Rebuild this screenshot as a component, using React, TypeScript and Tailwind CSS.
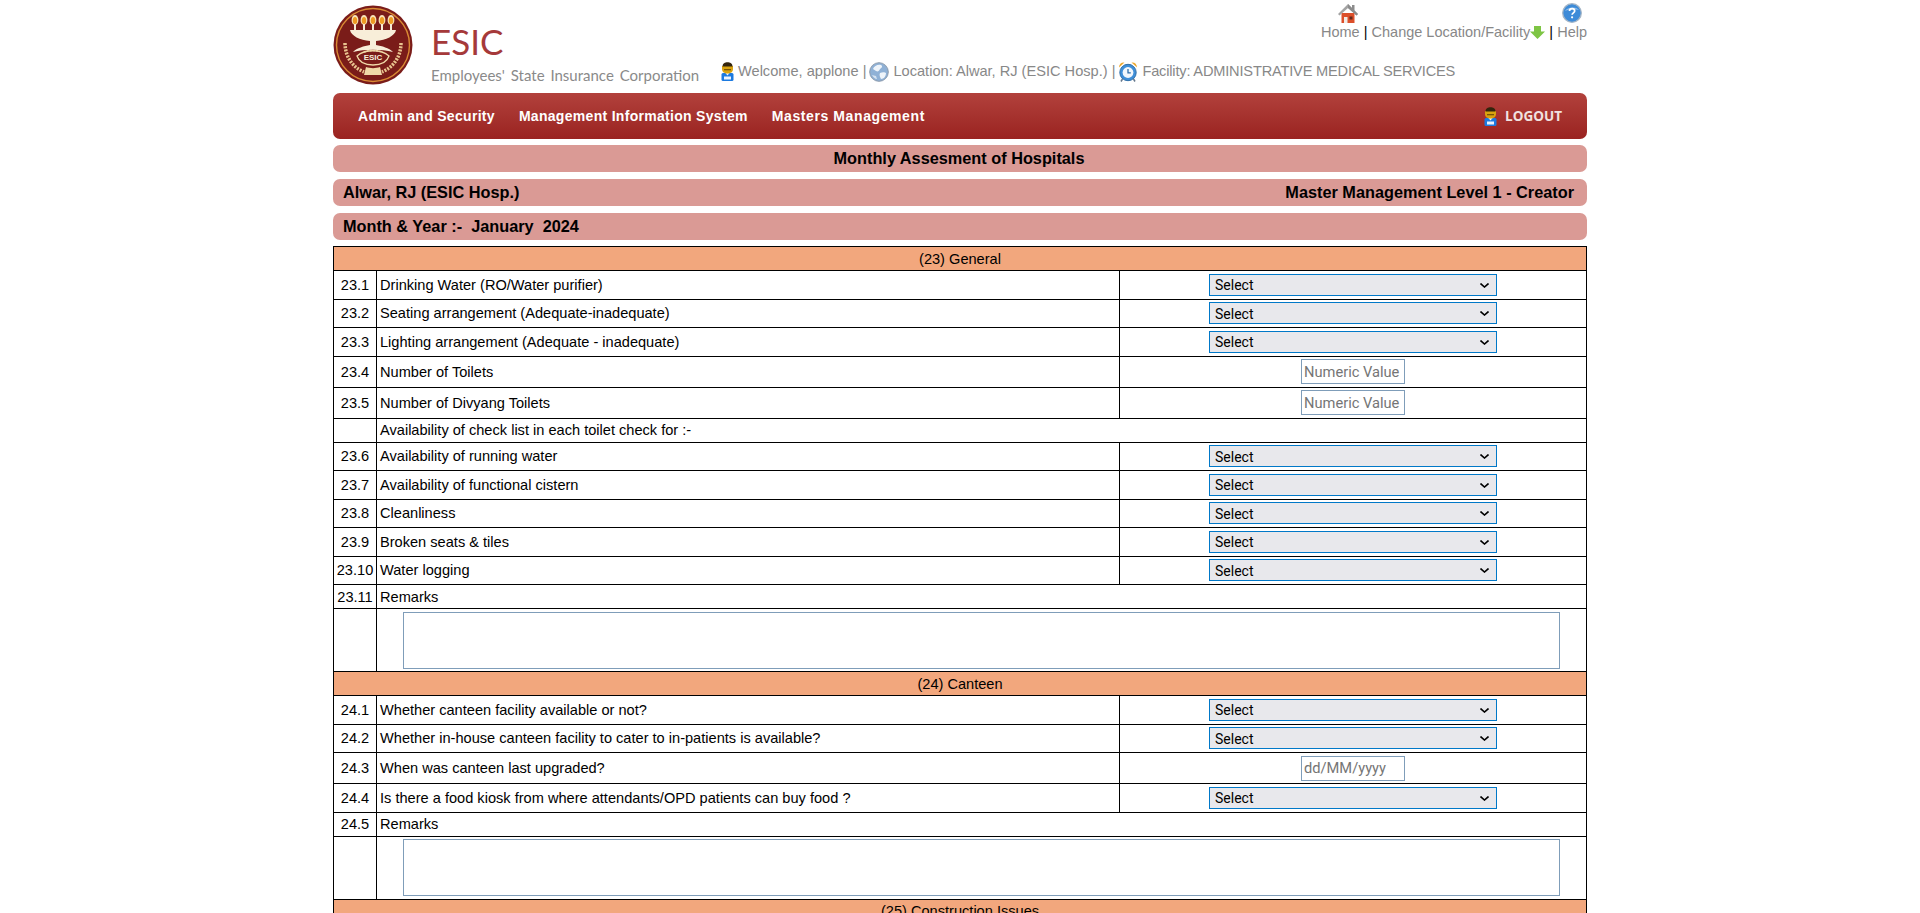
const SANS = "font-['Liberation_Sans',Arial,sans-serif]"

function UserIcon({ className = '' }: { className?: string }) {
  return (
    <svg viewBox="0 0 13 19" className={className}>
      <rect x="0.500" y="11" width="12" height="8" rx="1.500" fill="#1c7ae0" />
      <rect x="3" y="14.500" width="7" height="3" fill="#eaf3ff" />
      <path d="M4 10.500h5l-2.500 3z" fill="#f2f2f2" />
      <path d="M1 4h11v3c0 3-2.500 4.500-5.500 4.500S1 10 1 7z" fill="#d9a30f" />
      <rect x="3" y="7" width="7" height="1.300" fill="#7a5506" />
      <path d="M1.500 4.500C1.500 1.500 4 .3 6.500.3s5 1.200 5 4.200z" fill="#33240c" />
    </svg>
  )
}

function GlobeIcon({ className = '' }: { className?: string }) {
  return (
    <svg viewBox="0 0 20 20" className={className}>
      <circle cx="10" cy="10" r="9.300" fill="#8fb1d6" stroke="#8c9bac" />
      <path d="M4 7c1-3 5-5 8-4 2 1 1 3-1 4-1 2-2 3-4 2-1-1-2-1-3-2zM11 11c2-1 5-1 6 0 0 3-2 6-5 6-1-2-2-4-1-6z" fill="#eef4fa" />
      <path d="M3 13c1 2 3 4 5 4l-1-3z" fill="#d5e3f1" />
    </svg>
  )
}

function ClockIcon({ className = '' }: { className?: string }) {
  return (
    <svg viewBox="0 0 20 21" className={className}>
      <path d="M1 6.500C1 3 3.500 1 6.500 1.500zM19 6.500C19 3 16.500 1 13.500 1.500z" fill="#eda92f" />
      <path d="M4.500 18l-1.500 2.500M15.500 18l1.500 2.500" stroke="#66788c" strokeWidth="1.500" />
      <circle cx="10" cy="11.500" r="8.200" fill="#3f8fd8" stroke="#2f6fa9" />
      <circle cx="10" cy="11.500" r="5.400" fill="#f2f7fc" />
      <path d="M10 8v3.800h2.800" fill="none" stroke="#2f6fa9" strokeWidth="1.300" />
    </svg>
  )
}

function HomeIcon({ className = '' }: { className?: string }) {
  return (
    <svg viewBox="0 0 20 20" className={className}>
      <path d="M3.500 10h13v10h-13z" fill="#dc4f2a" />
      <rect x="6" y="14" width="3.500" height="6" fill="#f1ece6" />
      <rect x="11.500" y="13.500" width="3" height="3" fill="#62281a" />
      <path d="M0 11L10 1l10 10-1.500 1.500L10 5 1.500 12.500z" fill="#a3a3a3" />
      <path d="M10 1l4 4V2h2.500v5.500L20 11l-1.500 1.500L10 5z" fill="#8c8c8c" />
    </svg>
  )
}

function HelpIcon({ className = '' }: { className?: string }) {
  return (
    <svg viewBox="0 0 20 20" className={className}>
      <circle cx="10" cy="10" r="9.300" fill="#3d8bd8" stroke="#a4b5c6" strokeWidth="1.300" />
      <path d="M3 8c2-4 11-5 14-1-4-1-10-1-14 1z" fill="#8dbdea" />
      <path d="M7.500 8c0-3.200 5.200-3.200 5.200 0 0 1.800-2.600 2-2.600 3.800" fill="none" stroke="#fff" strokeWidth="1.700" />
      <circle cx="10.100" cy="14.300" r="1.100" fill="#fff" />
    </svg>
  )
}

function DownArrow({ className = '' }: { className?: string }) {
  return (
    <svg viewBox="0 0 15 13" className={className}>
      <path d="M4 0h7v5.500h4L7.500 13 0 5.500h4z" fill="#7ec544" />
    </svg>
  )
}

function Logo() {
  return (
    <svg viewBox="0 0 80 80" className="mt-[5px] h-[80px] w-[80px] shrink-0">
      <circle cx="40" cy="40" r="39.500" fill="#7a1c19" />
      <circle cx="40" cy="40" r="36.500" fill="none" stroke="#d98a34" strokeWidth="1.400" />
      {[22, 31, 40, 49, 58].map(x => (
        <g key={x}>
          <ellipse cx={x} cy="15" rx="3.400" ry="5" fill="#f7e3b8" />
          <ellipse cx={x} cy="15.500" rx="2.200" ry="3.600" fill="#ee9a22" />
          <rect x={x - 1} y="19" width="2" height="6" fill="#f7ecd6" />
        </g>
      ))}
      <path d="M17 25h46c-1 6-10 10-20 11v4c6 1 13 3 17 7-12-3-28-3-40 0 4-4 11-6 17-7v-4c-10-1-19-5-20-11z" fill="#f8eed9" />
      <path d="M24 51c8-7 24-7 32 0-2 6-8 9-16 9s-14-3-16-9z" fill="#7a1c19" stroke="#f0d9a8" strokeWidth="1.300" />
      <path d="M31 47c5-2 13-2 18 0" fill="none" stroke="#f0d9a8" strokeWidth="1.500" strokeDasharray="2 1" />
      <text x="40" y="55" textAnchor="middle" fontSize="8" fontWeight="700" fill="#f8eed9" fontFamily="Liberation Sans, sans-serif">ESIC</text>
      <path d="M12 38c0 13 7 24 19 29M68 38c0 13-7 24-19 29" fill="none" stroke="#e9c48f" strokeWidth="3.500" strokeDasharray="2 1.200" />
      <path d="M33 62l-2 8h18l-2-8c-4 1.500-10 1.500-14 0z" fill="#f0d9a8" />
    </svg>
  )
}

function Sep() {
  return <span className="text-black">|</span>
}

function Select() {
  return (
    <div className="relative mx-auto h-[22px] w-[288px]">
      <select className="block h-full w-full appearance-none border border-[#0078c8] bg-[#e8e8ec] pl-[5px] pt-[2px] font-['Roboto',sans-serif] text-[14px] text-black">
        <option>Select</option>
      </select>
      <svg viewBox="0 0 9 5" className="pointer-events-none absolute right-[8px] top-[9px] h-[5px] w-[9px]">
        <path d="M.500.500l4 3.500 4-3.500" fill="none" stroke="#000" strokeWidth="1.600" />
      </svg>
    </div>
  )
}

function TextBox({ placeholder }: { placeholder: string }) {
  return (
    <input
      placeholder={placeholder}
      className="mx-auto block h-[25px] w-[104px] border border-[#7f9db9] px-[2px] font-['Roboto',sans-serif] text-[14.670px] placeholder:text-[#757575]"
    />
  )
}

const cell = 'border border-black align-middle'
const textCell = `${cell} px-[3px] pb-0 pt-[1px]`
const noCell = `${cell} px-0 pb-0 pt-[1px] text-center`

function SectionRow({ title }: { title: string }) {
  return (
    <tr className="h-[24px]">
      <td colSpan={3} className={`${noCell} bg-[#f2a77d]`}>{title}</td>
    </tr>
  )
}

function SelectRow({ no, label }: { no: string; label: string }) {
  return (
    <tr className="h-[28.500px]">
      <td className={noCell}>{no}</td>
      <td className={textCell}>{label}</td>
      <td className={`${cell} p-0`}><Select /></td>
    </tr>
  )
}

function InputRow({ no, label, placeholder }: { no: string; label: string; placeholder: string }) {
  return (
    <tr className="h-[31px]">
      <td className={noCell}>{no}</td>
      <td className={textCell}>{label}</td>
      <td className={`${cell} p-0`}><TextBox placeholder={placeholder} /></td>
    </tr>
  )
}

function RemarksRows({ no }: { no: string }) {
  return (
    <>
      <tr className="h-[24px]">
        <td className={noCell}>{no}</td>
        <td colSpan={2} className={textCell}>Remarks</td>
      </tr>
      <tr className="h-[63px]">
        <td className={cell}></td>
        <td colSpan={2} className={`${cell} p-0`}>
          <textarea className="ml-[26px] block h-[57px] w-[1157px] resize-none border border-[#7f9db9]" />
        </td>
      </tr>
    </>
  )
}

export default function App() {
  return (
    <div className={`h-screen overflow-hidden bg-white text-[14.600px] leading-[17px] text-black ${SANS}`}>
      <div className="mx-auto w-[1254px]">
        <header className="flex h-[93px]">
          <Logo />
          <div className="ml-[18px] flex w-[281px] shrink-0 flex-col">
            <span className="mt-[18px] font-['Lato',sans-serif] text-[35px] font-normal leading-[46px] text-[#a5393a]">ESIC</span>
            <span className="mt-[1px] whitespace-nowrap font-['Lato',sans-serif] text-[15px] leading-[20px] text-[#8a8a8a] [word-spacing:2px]">Employees' State Insurance Corporation</span>
          </div>
          <div className="flex min-w-0 flex-1 flex-col items-end pt-[3px] text-[#888888]">
            <div className="flex h-[20px] items-end pr-[5px]">
              <HomeIcon className="mr-[204px] h-[20px] w-[20px]" />
              <HelpIcon className="h-[20px] w-[20px]" />
            </div>
            <div className="flex items-center whitespace-nowrap text-[14.500px] leading-[18px]">
              <span>Home</span>&nbsp;<Sep />&nbsp;<span>Change Location/Facility</span>
              <DownArrow className="h-[13px] w-[15px]" />&nbsp;<Sep />&nbsp;<span>Help</span>
            </div>
            <div className="mt-[20px] flex h-[21px] w-full items-center whitespace-nowrap pl-[9px]">
              <UserIcon className="h-[19px] w-[13px]" />
              <span className="ml-[4px]">Welcome, applone |</span>
              <GlobeIcon className="ml-[3px] h-[20px] w-[20px]" />
              <span className="ml-[4px]">Location: Alwar, RJ (ESIC Hosp.) |</span>
              <ClockIcon className="ml-[3px] h-[21px] w-[20px]" />
              <span className="ml-[4px] tracking-[-0.180px]">Facility: ADMINISTRATIVE MEDICAL SERVICES</span>
            </div>
          </div>
        </header>

        <nav className="flex h-[46px] items-center justify-between rounded-[7px] bg-gradient-to-b from-[#b2413c] to-[#9a2220] pl-[25px] pr-[25px] text-[14px] font-bold tracking-[0.300px] text-white">
          <div className="flex gap-[24px]">
            <span>Admin and Security</span>
            <span>Management Information System</span>
            <span className="tracking-[0.600px]">Masters Management</span>
          </div>
          <div className="flex items-center gap-[8px] text-[#f1e2e0]">
            <UserIcon className="h-[19px] w-[13px]" />
            <span className="font-['Open_Sans',sans-serif] text-[13.500px] font-bold tracking-normal">LOGOUT</span>
          </div>
        </nav>

        <div className="mt-[6px] flex h-[27px] items-center justify-center rounded-[7px] bg-[#da9a95] pr-[2px] text-[16.300px] font-bold">
          Monthly Assesment of Hospitals
        </div>
        <div className="mt-[7px] flex h-[27px] items-center justify-between rounded-[7px] bg-[#da9a95] pl-[10px] pr-[13px] text-[16.300px] font-bold">
          <span>Alwar, RJ (ESIC Hosp.)</span>
          <span>Master Management Level 1 - Creator</span>
        </div>
        <div className="mt-[7px] flex h-[27px] items-center whitespace-pre rounded-[7px] bg-[#da9a95] pl-[10px] text-[16.300px] font-bold">
          Month &amp; Year :-  January  2024
        </div>

        <table className="mt-[6px] w-[1253px] table-fixed border-collapse">
          <colgroup>
            <col className="w-[43px]" />
            <col className="w-[743px]" />
            <col className="w-[467px]" />
          </colgroup>
          <tbody>
            <SectionRow title="(23) General" />
            <SelectRow no="23.1" label="Drinking Water (RO/Water purifier)" />
            <SelectRow no="23.2" label="Seating arrangement (Adequate-inadequate)" />
            <SelectRow no="23.3" label="Lighting arrangement (Adequate - inadequate)" />
            <InputRow no="23.4" label="Number of Toilets" placeholder="Numeric Value" />
            <InputRow no="23.5" label="Number of Divyang Toilets" placeholder="Numeric Value" />
            <tr className="h-[24px]">
              <td className={cell}></td>
              <td colSpan={2} className={textCell}>Availability of check list in each toilet check for :-</td>
            </tr>
            <SelectRow no="23.6" label="Availability of running water" />
            <SelectRow no="23.7" label="Availability of functional cistern" />
            <SelectRow no="23.8" label="Cleanliness" />
            <SelectRow no="23.9" label="Broken seats & tiles" />
            <SelectRow no="23.10" label="Water logging" />
            <RemarksRows no="23.11" />
            <SectionRow title="(24) Canteen" />
            <SelectRow no="24.1" label="Whether canteen facility available or not?" />
            <SelectRow no="24.2" label="Whether in-house canteen facility to cater to in-patients is available?" />
            <InputRow no="24.3" label="When was canteen last upgraded?" placeholder="dd/MM/yyyy" />
            <SelectRow no="24.4" label="Is there a food kiosk from where attendants/OPD patients can buy food ?" />
            <RemarksRows no="24.5" />
            <SectionRow title="(25) Construction Issues" />
          </tbody>
        </table>
      </div>
    </div>
  )
}
